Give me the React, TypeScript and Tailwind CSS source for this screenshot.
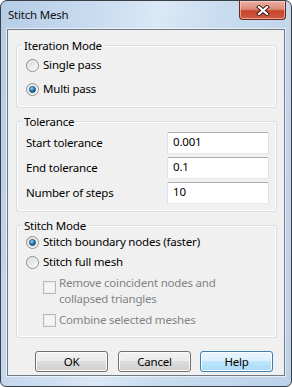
import React from "react";

function Radio({ checked }: { checked?: boolean }) {
  return (
    <svg width="13" height="13" viewBox="0 0 13 13" className="shrink-0">
      <defs>
        <linearGradient id="rgOuter" x1="0" y1="0" x2="1" y2="1">
          <stop offset="0" stopColor="#d2d2d2" />
          <stop offset="1" stopColor="#ffffff" />
        </linearGradient>
        <radialGradient id="rgDot" cx="0.38" cy="0.32" r="0.75">
          <stop offset="0" stopColor="#a6dcfa" />
          <stop offset="0.45" stopColor="#2f86c4" />
          <stop offset="1" stopColor="#0d3d68" />
        </radialGradient>
      </defs>
      <circle cx="6.5" cy="6.5" r="6" fill="url(#rgOuter)" stroke="#8a8d90" strokeWidth="1" />
      <circle cx="6.5" cy="6.5" r="4.6" fill="none" stroke="#f6f6f6" strokeWidth="0.8" />
      {checked && (
        <circle cx="6.5" cy="6.5" r="3.1" fill="url(#rgDot)" stroke="#1a4c73" strokeWidth="0.7" />
      )}
    </svg>
  );
}

function DisabledCheck() {
  return (
    <span className="block w-[13px] h-[13px] shrink-0 border border-[#b9b9b9] bg-[#f4f4f4] shadow-[inset_0_0_0_1px_#ececec]" />
  );
}

function Group({ label, children, className }: { label: string; children: React.ReactNode; className?: string }) {
  return (
    <div className={"relative border border-[#d5dfe5] rounded-[3px] shadow-[inset_0_0_0_1px_#ffffff] " + (className ?? "")}>
      <span className="absolute -top-[8px] left-[5px] px-[2px] bg-[#f0f0f0] leading-[16px]">{label}</span>
      {children}
    </div>
  );
}

function Field({ value }: { value: string }) {
  return (
    <div className="w-[102px] h-[22px] bg-white border border-[#dbdfe6] border-t-[#abadb3] border-b-[#e3e9ef] rounded-[2px] pl-[5px] pt-[1px] leading-[16px]">
      {value}
    </div>
  );
}

function Button({ label, def, className }: { label: string; def?: boolean; className?: string }) {
  const base =
    "w-[73px] h-[21px] flex items-center justify-center rounded-[3px] border leading-[16px] shadow-[inset_0_0_0_1px_#fcfcfc] ";
  const normal =
    "border-[#707070] bg-[linear-gradient(to_bottom,#f2f2f2_0%,#ebebeb_50%,#dddddd_50%,#cfcfcf_100%)] ";
  const blue =
    "border-[#3c7fb1] bg-[linear-gradient(to_bottom,#eaf6fd_0%,#d9f0fc_50%,#bee6fd_50%,#a7d9f5_100%)] shadow-[inset_0_0_0_1px_#e6f5fd] ";
  return <div className={base + (def ? blue : normal) + (className ?? "")}>{label}</div>;
}

export default function App() {
  return (
    <div
      className="relative w-[292px] h-[387px] flex flex-col border border-[#3a3f45] rounded-t-[7px] rounded-b-[6px] overflow-hidden bg-[linear-gradient(100deg,#b6cde6_0%,#cadcf0_28%,#dae8f6_45%,#c9dcef_62%,#bcd2ea_100%)] text-[11.5px] tracking-[-0.2px] text-black"
      style={{ fontFamily: '"Noto Sans", "Open Sans", sans-serif' }}
    >
      {/* title bar */}
      <div className="h-[28px] shrink-0 pl-[7px] pt-[6px] leading-[16px] text-[#101010]">Stitch Mesh</div>

      {/* close button */}
      <div className="absolute top-0 right-[5px] w-[47px] h-[19px] rounded-b-[4px] border border-t-0 border-[#6a2a1e] bg-[linear-gradient(to_bottom,#eab1a4_0%,#dd8b79_45%,#c7452d_55%,#cf5a42_100%)] shadow-[inset_0_0_0_1px_rgba(255,220,210,0.55)] flex items-center justify-center">
        <svg width="14" height="11" viewBox="0 0 14 11">
          <path d="M3 2 L11 9 M11 2 L3 9" stroke="#3c1a14" strokeWidth="4" strokeLinecap="square" />
          <path d="M3 2 L11 9 M11 2 L3 9" stroke="#ffffff" strokeWidth="2.2" strokeLinecap="square" />
        </svg>
      </div>

      {/* client area */}
      <div className="mx-[6px] h-[347px] shrink-0 border border-[#6f7a85] bg-[#f0f0f0] flex flex-col pl-[8px] pr-[7px] pt-[15px] pb-[3px] shadow-[0_0_0_1px_rgba(255,255,255,0.6)]">
        {/* Iteration Mode */}
        <Group label="Iteration Mode" className="h-[63px] pt-[9px] pl-[9px]">
          <div className="h-[20px] flex items-center gap-[4px] leading-[16px]">
            <Radio />
            <span>Single pass</span>
          </div>
          <div className="h-[20px] mt-[4px] flex items-center gap-[4px] leading-[16px]">
            <Radio checked />
            <span>Multi pass</span>
          </div>
        </Group>

        {/* Tolerance */}
        <Group label="Tolerance" className="h-[91px] mt-[13px] pt-[10px] pl-[9px] pr-[7px]">
          <div className="flex flex-col gap-[3px]">
            <div className="flex items-center justify-between">
              <span className="leading-[16px]">Start tolerance</span>
              <Field value="0.001" />
            </div>
            <div className="flex items-center justify-between">
              <span className="leading-[16px]">End tolerance</span>
              <Field value="0.1" />
            </div>
            <div className="flex items-center justify-between">
              <span className="leading-[16px]">Number of steps</span>
              <Field value="10" />
            </div>
          </div>
        </Group>

        {/* Stitch Mode */}
        <Group label="Stitch Mode" className="h-[113px] mt-[13px] pt-[6px] pl-[9px]">
          <div className="h-[20px] flex items-center gap-[4px] leading-[16px]">
            <Radio checked />
            <span>Stitch boundary nodes (faster)</span>
          </div>
          <div className="h-[20px] flex items-center gap-[4px] leading-[16px]">
            <Radio />
            <span>Stitch full mesh</span>
          </div>
          <div className="mt-[3px] pl-[17px] flex items-start gap-[3px] text-[#838383] leading-[16px]">
            <div className="pt-[6px]">
              <DisabledCheck />
            </div>
            <span>
              Remove coincident nodes and
              <br />
              collapsed triangles
            </span>
          </div>
          <div className="mt-[5px] h-[16px] pl-[17px] flex items-center gap-[3px] text-[#838383] leading-[16px]">
            <DisabledCheck />
            <span>Combine selected meshes</span>
          </div>
        </Group>

        {/* Buttons */}
        <div className="mt-[13px] pl-[19px] flex">
          <Button label="OK" />
          <Button label="Cancel" className="ml-[10px]" />
          <Button label="Help" def className="ml-[9px]" />
        </div>
      </div>
    </div>
  );
}
